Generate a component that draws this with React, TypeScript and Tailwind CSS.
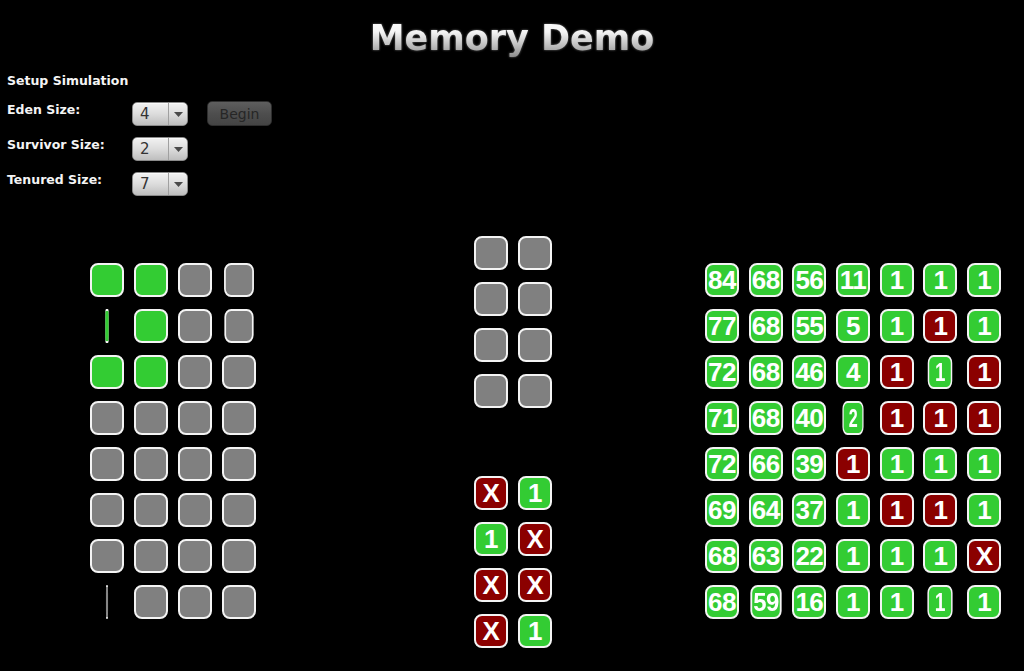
import React from "react";

type Cell = { c: "g" | "r" | "n"; t?: string; s?: number };

const g = (t?: string, s?: number): Cell => ({ c: "g", t, s });
const r = (t?: string, s?: number): Cell => ({ c: "r", t, s });
const n = (s?: number): Cell => ({ c: "n", s });

function Tile({ cell }: { cell: Cell }) {
  const bg =
    cell.c === "g" ? "bg-[#33cc33]" : cell.c === "r" ? "bg-[#8b0000]" : "bg-[#808080]";
  const scale = cell.s ?? 1;
  return (
    <div className="w-[34px] h-[34px] flex justify-center">
      <div
        className={`w-[34px] h-[34px] shrink-0 rounded-[8px] border-2 border-[#f4f4f4] ${bg} flex items-center justify-center text-white font-bold text-[26px] leading-none whitespace-nowrap tracking-[-0.5px]`}
        style={{
          fontFamily: '"Liberation Sans", Arial, sans-serif',
          transform: scale !== 1 ? `scaleX(${scale})` : undefined,
        }}
      >
        {cell.t}
      </div>
    </div>
  );
}

function Grid({ rows, gapX = "gap-x-[10px]" }: { rows: Cell[][]; gapX?: string }) {
  return (
    <div className="flex flex-col gap-y-[12px]">
      {rows.map((row, i) => (
        <div key={i} className={`flex ${gapX}`}>
          {row.map((cell, j) => (
            <Tile key={j} cell={cell} />
          ))}
        </div>
      ))}
    </div>
  );
}

const leftRows: Cell[][] = [
  [g(), g(), n(), n(0.88)],
  [g(undefined, 0.11), g(), n(), n(0.86)],
  [g(), g(), n(), n()],
  [n(), n(), n(), n()],
  [n(), n(), n(), n()],
  [n(), n(), n(), n()],
  [n(), n(), n(), n()],
  [n(0.06), n(), n(), n()],
];

const midTop: Cell[][] = [
  [n(), n()],
  [n(), n()],
  [n(), n()],
  [n(), n()],
];

const midBottom: Cell[][] = [
  [r("X"), g("1")],
  [g("1"), r("X")],
  [r("X"), r("X")],
  [r("X"), g("1")],
];

const rightRows: Cell[][] = [
  [g("84"), g("68"), g("56"), g("11"), g("1"), g("1"), g("1")],
  [g("77"), g("68"), g("55"), g("5"), g("1"), r("1"), g("1")],
  [g("72"), g("68"), g("46"), g("4"), r("1"), g("1", 0.72), r("1")],
  [g("71"), g("68"), g("40"), g("2", 0.62), r("1"), r("1"), r("1")],
  [g("72"), g("66"), g("39"), r("1"), g("1"), g("1"), g("1")],
  [g("69"), g("64"), g("37"), g("1"), r("1"), r("1"), g("1")],
  [g("68"), g("63"), g("22"), g("1"), g("1"), g("1"), r("X")],
  [g("68"), g("59", 0.92), g("16"), g("1"), g("1"), g("1", 0.74), g("1")],
];

function Combo({ value }: { value: string }) {
  return (
    <div className="w-[56px] h-[24px] rounded-[5px] border border-[#8a8a8a] bg-[linear-gradient(to_bottom,#f2f2f2_0%,#dcdcdc_50%,#bebebe_100%)] flex items-stretch shadow-[inset_0_1px_0_#fafafa]">
      <div
        className="w-[35px] pl-[7px] flex items-center text-[15px] text-[#333333] leading-none"
        style={{ fontFamily: '"DejaVu Sans", sans-serif' }}
      >
        {value}
      </div>
      <div className="w-px bg-[#a0a0a0]" />
      <div className="flex-1 flex items-center justify-center">
        <svg width="9" height="5" viewBox="0 0 9 5">
          <polygon points="0,0 9,0 4.5,5" fill="#4a4a4a" />
        </svg>
      </div>
    </div>
  );
}

const labelCls =
  "w-[125px] shrink-0 leading-[16px] text-[12.5px] font-bold text-[#f4f4f4] whitespace-nowrap [text-shadow:0_1px_2px_rgba(0,0,0,0.9)]";

export default function App() {
  return (
    <div className="w-full h-[671px] bg-black overflow-hidden flex flex-col">
      <div className="pt-[18px] text-center">
        <span
          className="inline-block text-[35px] leading-[40px] font-bold bg-[linear-gradient(to_bottom,#ffffff_0%,#f4f4f4_35%,#b4b4b4_75%,#888888_100%)] bg-clip-text text-transparent [filter:drop-shadow(0_0_1px_rgba(160,160,160,0.7))]"
          style={{ fontFamily: '"DejaVu Sans", sans-serif' }}
        >
          Memory Demo
        </span>
      </div>

      <div className="pt-[15px] pl-[7px]" style={{ fontFamily: '"DejaVu Sans", sans-serif' }}>
        <div className={labelCls}>Setup Simulation</div>
        <div className="mt-[13px] flex flex-col gap-[11px]">
          <div className="flex items-start h-[24px]">
            <div className={labelCls}>Eden Size:</div>
            <Combo value="4" />
            <div className="ml-[19px] -mt-[1px] w-[65px] h-[25px] rounded-[5px] border border-[#2e2e2e] bg-[linear-gradient(to_bottom,#5e5e5e_0%,#4e4e4e_50%,#444444_100%)] flex items-center justify-center text-[14px] text-[#262626] leading-none">
              Begin
            </div>
          </div>
          <div className="flex items-start h-[24px]">
            <div className={labelCls}>Survivor Size:</div>
            <Combo value="2" />
          </div>
          <div className="flex items-start h-[24px]">
            <div className={labelCls}>Tenured Size:</div>
            <Combo value="7" />
          </div>
        </div>
      </div>

      <div className="mt-[40px] flex items-start">
        <div className="ml-[90px] mt-[27px]">
          <Grid rows={leftRows} />
        </div>
        <div className="ml-[218px] flex flex-col">
          <Grid rows={midTop} />
          <div className="mt-[68px]">
            <Grid rows={midBottom} />
          </div>
        </div>
        <div className="ml-[153px] mt-[27px]">
          <Grid rows={rightRows} gapX="gap-x-[9.7px]" />
        </div>
      </div>
    </div>
  );
}
